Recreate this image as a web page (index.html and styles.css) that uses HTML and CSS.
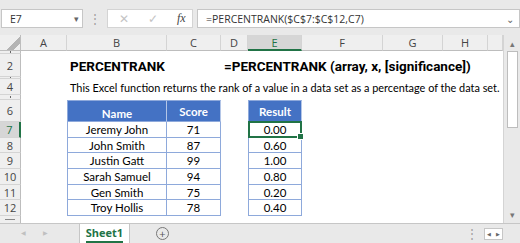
FILE: index.html
```html
<!DOCTYPE html>
<html lang="en">
<head>
    <meta charset="UTF-8">
    <title>PERCENTRANK</title>
    <link rel="stylesheet" href="styles.css">
</head>
<body>
<div class="app">
    <!-- formula bar -->
    <div class="formula-bar">
        <div class="name-box"><span>E7</span><span class="caret">&#9662;</span></div>
        <div class="grip">&#8942;</div>
        <div class="fx-box">
            <span class="fx-btn">&#10005;</span>
            <span class="fx-btn">&#10003;</span>
            <span class="fx">fx</span>
        </div>
        <div class="formula"><span>=PERCENTRANK($C$7:$C$12,C7)</span><span class="chev">&#8964;</span></div>
    </div>

    <!-- sheet -->
    <div class="sheet">
        <div class="grid">
            <!-- column headers -->
            <div class="corner"></div>
            <div class="ch">A</div>
            <div class="ch">B</div>
            <div class="ch">C</div>
            <div class="ch">D</div>
            <div class="ch sel">E</div>
            <div class="ch">F</div>
            <div class="ch">G</div>
            <div class="ch">H</div>
            <div class="ch"></div>

            <div class="rh tiny"><i></i></div>
            <div class="span9"></div>

            <div class="rh">2</div>
            <div></div>
            <div class="title span2">PERCENTRANK</div>
            <div class="title span6">=PERCENTRANK (array, x, [significance])</div>

            <div class="rh tiny"><i></i></div>
            <div class="span9"></div>

            <div class="rh">4</div>
            <div></div>
            <div class="desc span8">This Excel function returns the rank of a value in a data set as a percentage of the data set.</div>

            <div class="rh tiny"><i></i></div>
            <div class="span9"></div>

            <div class="rh">6</div>
            <div></div>
            <div class="th first bottom">Name</div>
            <div class="th">Score</div>
            <div></div>
            <div class="th first">Result</div>
            <div class="span4"></div>

            <div class="rh sel">7</div>
            <div></div>
            <div class="td first">Jeremy John</div>
            <div class="td">71</div>
            <div></div>
            <div class="td first active">0.00</div>
            <div class="span4"></div>

            <div class="rh">8</div>
            <div></div>
            <div class="td first">John Smith</div>
            <div class="td">87</div>
            <div></div>
            <div class="td first">0.60</div>
            <div class="span4"></div>

            <div class="rh">9</div>
            <div></div>
            <div class="td first">Justin Gatt</div>
            <div class="td">99</div>
            <div></div>
            <div class="td first">1.00</div>
            <div class="span4"></div>

            <div class="rh">10</div>
            <div></div>
            <div class="td first">Sarah Samuel</div>
            <div class="td">94</div>
            <div></div>
            <div class="td first">0.80</div>
            <div class="span4"></div>

            <div class="rh">11</div>
            <div></div>
            <div class="td first">Gen Smith</div>
            <div class="td">75</div>
            <div></div>
            <div class="td first">0.20</div>
            <div class="span4"></div>

            <div class="rh">12</div>
            <div></div>
            <div class="td first">Troy Hollis</div>
            <div class="td">78</div>
            <div></div>
            <div class="td first">0.40</div>
            <div class="span4"></div>

            <div class="rh cut"><i></i></div>
            <div class="span9"></div>
        </div>

        <div class="vscroll">
            <div class="arrow">&#9652;</div>
            <div class="thumb"></div>
            <div class="track"></div>
            <div class="arrow">&#9662;</div>
        </div>
    </div>

    <!-- sheet tabs -->
    <div class="tabs">
        <span class="nav">&#9664;</span>
        <span class="nav">&#9654;</span>
        <div class="tab"><span>Sheet1</span></div>
        <div class="add">+</div>
        <div class="spacer"></div>
        <div class="grip">&#8942;</div>
        <div class="hscroll"><span>&#9664;</span><span>&#9654;</span></div>
    </div>
</div>
</body>
</html>
```

FILE: styles.css
```css
body {
    margin: 0;
    font-family: "Lato", "Liberation Sans", sans-serif;
    background: #fff;
}

.app {
    width: 520px;
    height: 243px;
    overflow: hidden;
}

/* formula bar */
.formula-bar {
    height: 35px;
    box-sizing: border-box;
    padding-top: 9px;
    background: #e9e9e9;
    display: flex;
    align-items: flex-start;
    font-family: "Open Sans", sans-serif;
    font-size: 10.5px;
    color: #333;
}

.name-box {
    margin-left: 1px;
    width: 82px;
    height: 19px;
    box-sizing: border-box;
    background: #fff;
    border: 1px solid #c6c6c6;
    display: flex;
    align-items: center;
    justify-content: space-between;
    padding: 0 3px 0 8px;
}

.caret {
    font-size: 9px;
    color: #666;
}

.grip {
    width: 24px;
    text-align: center;
    color: #a0a0a0;
    font-size: 12px;
    line-height: 19px;
}

.fx-box {
    width: 86px;
    height: 19px;
    box-sizing: border-box;
    background: #fff;
    border: 1px solid #d4d4d4;
    display: flex;
    align-items: center;
    padding-left: 11px;
}

.fx-btn {
    width: 29px;
    color: #c4c4c4;
    font-size: 12px;
}

.fx {
    font-family: "Liberation Serif", serif;
    font-style: italic;
    font-size: 12px;
    color: #444;
}

.formula {
    flex: 1;
    margin-left: 4px;
    height: 19px;
    box-sizing: border-box;
    background: #fff;
    border: 1px solid #c6c6c6;
    display: flex;
    align-items: center;
    justify-content: space-between;
    padding: 0 5px 0 8px;
}

.chev {
    color: #666;
    font-size: 10px;
    line-height: 8px;
}

/* grid */
.sheet {
    display: flex;
    height: 188px;
}

.grid {
    display: grid;
    grid-template-columns: 21px 46px 100px 54px 27px 54px 81px 60px 45px 15px;
    grid-template-rows: 16px 3px 23px 2px 16px 5px 22px 16px 15px 16px 16px 15px 16px 7px;
    width: 503px;
    background: #fff;
    font-size: 11.5px;
    color: #000;
}

.grid > div {
    box-sizing: border-box;
    min-width: 0;
}

.corner {
    background: #efefef linear-gradient(135deg, transparent 62%, #b4b4b4 62%, #b4b4b4 82%, transparent 82%);
    border-right: 1px solid #bdbdbd;
    border-bottom: 1px solid #bdbdbd;
}

.ch {
    background: #efefef;
    border-right: 1px solid #d4d4d4;
    border-bottom: 1px solid #bdbdbd;
    text-align: center;
    line-height: 15px;
    font-family: "Open Sans", sans-serif;
    font-size: 11px;
    color: #444;
}

.ch.sel {
    background: #d6d6d6;
    border-bottom: 2px solid #217346;
    color: #217346;
}

.rh {
    background: #efefef;
    border-right: 1px solid #bdbdbd;
    border-bottom: 1px solid #d4d4d4;
    display: flex;
    align-items: center;
    justify-content: center;
    overflow: hidden;
    font-family: "Open Sans", sans-serif;
    font-size: 11px;
    color: #444;
}

.rh i {
    width: 1px;
    height: 2px;
    background: #666;
}

.rh.cut {
    align-items: flex-start;
    border-bottom: none;
    padding-top: 3px;
}

.rh.cut i {
    width: 10px;
    height: 1px;
    background: #888;
}

.rh.sel {
    background: #d6d6d6;
    border-right: 2px solid #217346;
    color: #217346;
}

.span2 { grid-column: span 2; }
.span4 { grid-column: span 4; }
.span6 { grid-column: span 6; }
.span8 { grid-column: span 8; }
.span9 { grid-column: span 9; }

.title {
    font-family: "Roboto", sans-serif;
    font-weight: bold;
    font-size: 13.5px;
    padding-left: 3px;
    display: flex;
    align-items: center;
    white-space: nowrap;
}

.desc {
    font-size: 10.9px;
    padding-left: 3px;
    display: flex;
    align-items: center;
    white-space: nowrap;
}

.th,
.td {
    border-right: 1px solid #8ea9db;
    border-bottom: 1px solid #8ea9db;
    display: flex;
    align-items: center;
    justify-content: center;
    white-space: nowrap;
}

.first {
    border-left: 1px solid #8ea9db;
}

.th {
    background: #4472c4;
    color: #fff;
    font-weight: bold;
    border-top: 1px solid #8ea9db;
    border-right-color: #b4c6e7;
}

.th.first {
    border-left-color: #8ea9db;
}

.th.bottom {
    align-items: flex-end;
    padding-bottom: 1px;
}

.td.active {
    position: relative;
}

.td.active::before {
    content: "";
    position: absolute;
    left: -1px;
    top: -1px;
    right: -1px;
    bottom: -1px;
    border: 2px solid #217346;
}

.td.active::after {
    content: "";
    position: absolute;
    right: -3px;
    bottom: -3px;
    width: 5px;
    height: 5px;
    background: #217346;
    border: 1px solid #fff;
}

/* vertical scrollbar */
.vscroll {
    width: 17px;
    background: #e9e9e9;
    border-left: 1px solid #d4d4d4;
    box-sizing: border-box;
    display: flex;
    flex-direction: column;
    align-items: center;
    padding: 1px 0;
}

.arrow {
    height: 15px;
    line-height: 15px;
    font-size: 9px;
    color: #777;
}

.thumb {
    width: 11px;
    height: 77px;
    background: #fff;
    border: 1px solid #bdbdbd;
    box-sizing: border-box;
}

.track {
    flex: 1;
}

/* sheet tabs */
.tabs {
    height: 20px;
    background: #e9e9e9;
    border-top: 1px solid #c6c6c6;
    box-sizing: border-box;
    display: flex;
    align-items: stretch;
    font-family: "Open Sans", sans-serif;
    font-size: 11px;
}

.nav {
    width: 22px;
    text-align: center;
    color: #c0c0c0;
    font-size: 6px;
    line-height: 19px;
}

.nav:first-child {
    margin-left: 12px;
}

.tab {
    margin-left: 23px;
    width: 49px;
    background: #fff;
    border-left: 1px solid #c6c6c6;
    border-right: 1px solid #c6c6c6;
    display: flex;
    justify-content: center;
    align-items: flex-end;
    color: #217346;
    font-weight: bold;
}

.tab span {
    border-bottom: 2px solid #217346;
    line-height: 16px;
}

.add {
    margin-left: 26px;
    align-self: center;
    width: 11px;
    height: 11px;
    border: 1px solid #777;
    border-radius: 50%;
    color: #555;
    font-size: 11px;
    line-height: 11px;
    text-align: center;
}

.spacer {
    flex: 1;
}

.tabs .grip {
    line-height: 19px;
}

.hscroll {
    margin-right: 17px;
    align-self: center;
    width: 19px;
    height: 12px;
    border: 1px solid #c6c6c6;
    background: #fff;
    box-sizing: border-box;
    display: flex;
    justify-content: space-around;
    align-items: center;
    font-size: 5px;
    color: #666;
}
```
